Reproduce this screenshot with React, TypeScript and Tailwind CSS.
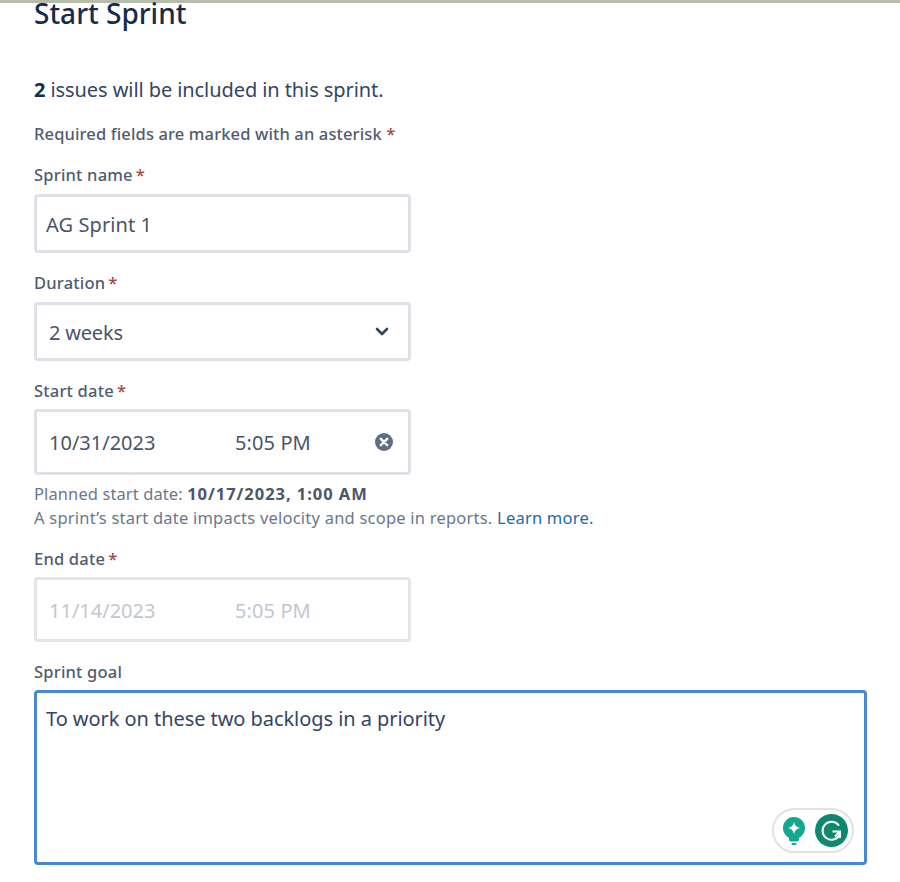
import React from "react";

const FONT = { fontFamily: '"Noto Sans", "Open Sans", sans-serif' };

const Label = ({ text, required }: { text: string; required?: boolean }) => (
  <div className="h-[20px] text-[16.5px] leading-[20px] font-medium text-[#505c6e] tracking-[0.2px]">
    {text}
    {required && <span className="ml-[3px] text-[#a5453c]">*</span>}
  </div>
);

const GrammarlyBadge = () => (
  <div className="absolute right-[10px] bottom-[9px] flex h-[45px] w-[82px] items-center gap-[9px] rounded-full border-2 border-[#dfe3e2] bg-white pl-[8px]">
    <svg width="24" height="28" viewBox="0 0 24 28">
      <circle cx="12" cy="11" r="11" fill="#14a88f" />
      <path d="M7 20h10v2.5a2 2 0 0 1-2 2H9a2 2 0 0 1-2-2z" fill="#14a88f" />
      <path d="M9.5 26h5v.5a1.5 1.5 0 0 1-1.5 1.5h-2a1.5 1.5 0 0 1-1.5-1.5z" fill="#14a88f" />
      <path d="M12 5c.7 3.6 2.4 5.3 6 6-3.6.7-5.3 2.4-6 6-.7-3.6-2.4-5.3-6-6 3.6-.7 5.3-2.4 6-6z" fill="#fff" />
    </svg>
    <svg width="33" height="33" viewBox="0 0 33 33">
      <circle cx="16.5" cy="16.5" r="16.5" fill="#0f8870" />
      <path d="M23.5 11a9 9 0 1 0 1 10" fill="none" stroke="#fff" strokeWidth="2" strokeLinecap="round" />
      <path d="M17.5 17.5h7.5v6.5M25 17.5l-5 5" fill="none" stroke="#fff" strokeWidth="2" />
    </svg>
  </div>
);

export default function App() {
  return (
    <div className="h-[882px] w-[900px] overflow-hidden bg-white" style={FONT}>
      <div className="h-[3px] bg-[#b5bdaa]" />
      <div className="px-[34px]">
        <h1 className="h-[24px] text-[28px] leading-[20px] font-medium text-[#172b4d]">
          Start Sprint
        </h1>
        <p className="mt-[50px] h-[26px] text-[20px] leading-[26px] text-[#344563] tracking-[-0.08px]">
          <b className="font-bold text-[#172b4d]">2</b> issues will be included in this sprint.
        </p>
        <p className="mt-[21px] h-[20px] text-[16.5px] leading-[20px] font-medium text-[#505c6e] tracking-[0.13px]">
          Required fields are marked with an asterisk <span className="text-[#a5453c]">*</span>
        </p>

        <div className="mt-[21px]">
          <Label text="Sprint name" required />
        </div>
        <div className="mt-[9px] flex h-[59px] w-[377px] items-center rounded-[4px] border-[3px] border-[#dfe1e6] pl-[9px] text-[20px] text-[#4a5568] tracking-[0.1px]">
          <span className="pt-[2px]">AG Sprint 1</span>
        </div>

        <div className="mt-[20px]">
          <Label text="Duration" required />
        </div>
        <div className="mt-[9px] flex h-[59px] w-[377px] items-center justify-between rounded-[4px] border-[3px] border-[#dfe1e6] pr-[19px] pl-[12px] text-[20px] text-[#4a5568] tracking-[-0.2px]">
          <span className="pt-[2px]">2 weeks</span>
          <svg width="14" height="10" viewBox="0 0 14 10">
            <path d="M2 2l5 5 5-5" fill="none" stroke="#344563" strokeWidth="2.6" strokeLinecap="round" strokeLinejoin="round" />
          </svg>
        </div>

        <div className="mt-[20px]">
          <Label text="Start date" required />
        </div>
        <div className="mt-[8px] flex h-[66px] w-[377px] items-center rounded-[4px] border-[3px] border-[#dfe1e6] pl-[12px] text-[20px] text-[#4a5568]">
          <span className="w-[186px] pt-[2px]">10/31/2023</span>
          <span className="w-[140px] pt-[2px] tracking-[0.1px]">5:05 PM</span>
          <svg width="18" height="18" viewBox="0 0 18 18">
            <circle cx="9" cy="9" r="9" fill="#5e6c84" />
            <path d="M5.8 5.8l6.4 6.4M12.2 5.8l-6.4 6.4" stroke="#fff" strokeWidth="2.4" strokeLinecap="round" />
          </svg>
        </div>

        <p className="mt-[7px] h-[24px] text-[16.5px] leading-[24px] text-[#6b778c] tracking-[0.1px]">
          Planned start date: <b className="font-bold text-[#4b5768] tracking-[0.95px]">10/17/2023, 1:00 AM</b>
        </p>
        <p className="h-[24px] text-[16.5px] leading-[24px] text-[#6b778c] tracking-[0.22px]">
          A sprint’s start date impacts velocity and scope in reports.{" "}
          <span className="text-[#1f6aa5]">Learn more.</span>
        </p>

        <div className="mt-[19px]">
          <Label text="End date" required />
        </div>
        <div className="mt-[8px] flex h-[65px] w-[377px] items-center rounded-[4px] border-[3px] border-[#e4e5e7] pl-[12px] text-[20px] text-[#c1c7d0]">
          <span className="w-[186px] pt-[2px]">11/14/2023</span>
          <span className="pt-[2px] tracking-[0.1px]">5:05 PM</span>
        </div>

        <div className="mt-[20px]">
          <Label text="Sprint goal" />
        </div>
        <div className="relative mt-[8px] h-[175px] w-[833px] rounded-[4px] border-[3px] border-[#4a86d8] pt-[11px] pl-[9px] text-[20px] leading-[30px] text-[#344563] tracking-[-0.06px]">
          To work on these two backlogs in a priority
          <GrammarlyBadge />
        </div>
      </div>
    </div>
  );
}
